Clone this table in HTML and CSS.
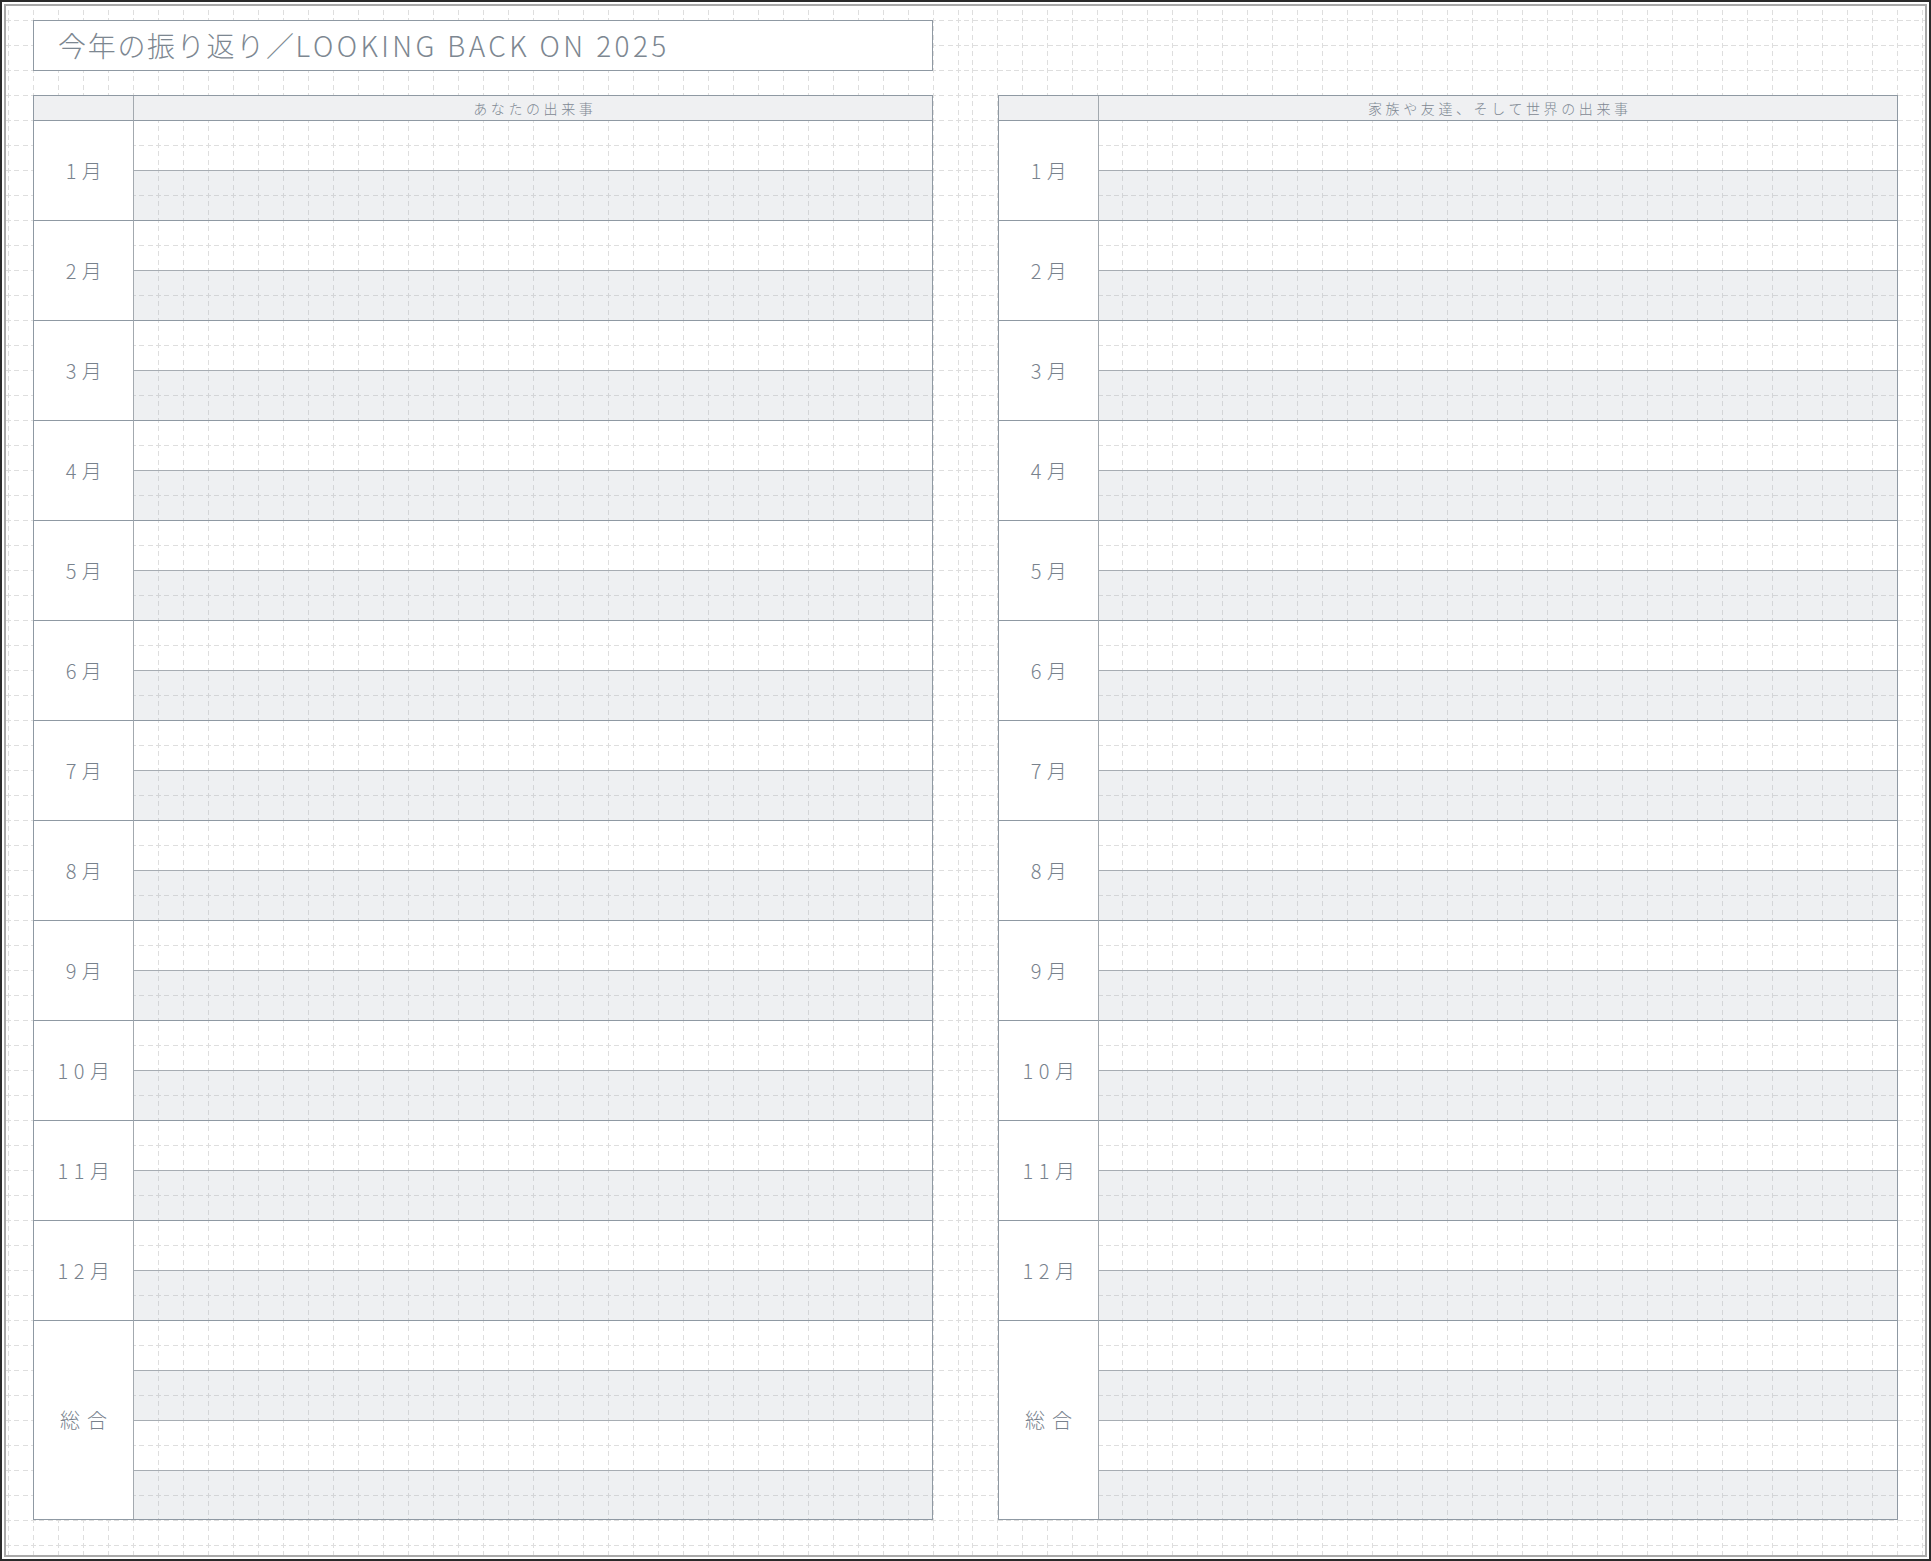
FILE: index.html
```html
<!DOCTYPE html>
<html lang="ja">
<head>
<meta charset="utf-8">
<title>今年の振り返り</title>
<link rel="stylesheet" href="styles.css">
</head>
<body>
<div class="frame">
  <div class="paper">
    <section class="page page-left">
      <h1 class="title"><span class="title-ja">今年の振り返り／</span><span class="title-en">LOOKING BACK ON 2025</span></h1>
      <div class="sheet">
        <div class="hd-label"></div><div class="hd-title">あなたの出来事</div>
        <div class="mlabel">1月</div><div class="lines"><div class="ln"></div><div class="ln shade"></div></div>
        <div class="mlabel">2月</div><div class="lines"><div class="ln"></div><div class="ln shade"></div></div>
        <div class="mlabel">3月</div><div class="lines"><div class="ln"></div><div class="ln shade"></div></div>
        <div class="mlabel">4月</div><div class="lines"><div class="ln"></div><div class="ln shade"></div></div>
        <div class="mlabel">5月</div><div class="lines"><div class="ln"></div><div class="ln shade"></div></div>
        <div class="mlabel">6月</div><div class="lines"><div class="ln"></div><div class="ln shade"></div></div>
        <div class="mlabel">7月</div><div class="lines"><div class="ln"></div><div class="ln shade"></div></div>
        <div class="mlabel">8月</div><div class="lines"><div class="ln"></div><div class="ln shade"></div></div>
        <div class="mlabel">9月</div><div class="lines"><div class="ln"></div><div class="ln shade"></div></div>
        <div class="mlabel">10月</div><div class="lines"><div class="ln"></div><div class="ln shade"></div></div>
        <div class="mlabel">11月</div><div class="lines"><div class="ln"></div><div class="ln shade"></div></div>
        <div class="mlabel">12月</div><div class="lines"><div class="ln"></div><div class="ln shade"></div></div>
        <div class="mlabel total">総合</div><div class="lines"><div class="ln"></div><div class="ln shade"></div><div class="ln"></div><div class="ln shade"></div></div>
      </div>
    </section>
    <section class="page page-right">
      <div class="sheet sheet-right">
        <div class="hd-label"></div><div class="hd-title">家族や友達、そして世界の出来事</div>
        <div class="mlabel">1月</div><div class="lines"><div class="ln"></div><div class="ln shade"></div></div>
        <div class="mlabel">2月</div><div class="lines"><div class="ln"></div><div class="ln shade"></div></div>
        <div class="mlabel">3月</div><div class="lines"><div class="ln"></div><div class="ln shade"></div></div>
        <div class="mlabel">4月</div><div class="lines"><div class="ln"></div><div class="ln shade"></div></div>
        <div class="mlabel">5月</div><div class="lines"><div class="ln"></div><div class="ln shade"></div></div>
        <div class="mlabel">6月</div><div class="lines"><div class="ln"></div><div class="ln shade"></div></div>
        <div class="mlabel">7月</div><div class="lines"><div class="ln"></div><div class="ln shade"></div></div>
        <div class="mlabel">8月</div><div class="lines"><div class="ln"></div><div class="ln shade"></div></div>
        <div class="mlabel">9月</div><div class="lines"><div class="ln"></div><div class="ln shade"></div></div>
        <div class="mlabel">10月</div><div class="lines"><div class="ln"></div><div class="ln shade"></div></div>
        <div class="mlabel">11月</div><div class="lines"><div class="ln"></div><div class="ln shade"></div></div>
        <div class="mlabel">12月</div><div class="lines"><div class="ln"></div><div class="ln shade"></div></div>
        <div class="mlabel total">総合</div><div class="lines"><div class="ln"></div><div class="ln shade"></div><div class="ln"></div><div class="ln shade"></div></div>
      </div>
    </section>
  </div>
</div>
</body>
</html>
```

FILE: styles.css
```css
html, body {
  margin: 0;
  padding: 0;
  background: #ffffff;
}

body {
  font-family: "Noto Sans CJK JP", "Noto Sans", sans-serif;
  color: #7b8590;
}

.frame {
  width: 1931px;
  height: 1561px;
  box-sizing: border-box;
  border: 2px solid #2a2a2a;
  padding: 2px;
  background: #ffffff;
}

/* horizontal dashed grid lines, every 25px, dashes 5px on / ~3px off */
.paper {
  height: 100%;
  box-sizing: border-box;
  border: 2px solid #a8a8a8;
  display: flex;
  background-color: #ffffff;
  background-image:
    conic-gradient(at 5px 1px, transparent 75%, #dedede 0),
    conic-gradient(at 5px 1px, transparent 75%, #dedede 0),
    conic-gradient(at 5px 1px, transparent 75%, #dedede 0);
  background-size: 25px 25px;
  background-position: 0 14px, 8px 14px, 17px 14px;
}

/* vertical dashed grid lines, every 25px */
.page {
  width: 951px;
  height: 100%;
  box-sizing: border-box;
  padding-top: 14px;
  background-image:
    conic-gradient(at 1px 5px, transparent 75%, #dedede 0),
    conic-gradient(at 1px 5px, transparent 75%, #dedede 0),
    conic-gradient(at 1px 5px, transparent 75%, #dedede 0);
  background-size: 25px 25px;
  background-position: 0 12px, 0 20px, 0 29px;
}

.page-left {
  margin-left: 2px;
  padding-left: 25px;
}

.page-right {
  margin-left: 13px;
  padding-left: 26px;
}

.title {
  box-sizing: border-box;
  width: 900px;
  height: 51px;
  margin: 0 0 24px 0;
  border: 1px solid #8f99a3;
  background: #ffffff;
  padding: 0 0 1px 24px;
  display: flex;
  align-items: center;
  font-size: 28px;
  font-weight: 300;
  color: #7d8791;
  line-height: 1;
  white-space: nowrap;
}

.title-ja {
  letter-spacing: 1.7px;
}

.title-en {
  letter-spacing: 3.4px;
}

.sheet {
  width: 900px;
  box-sizing: border-box;
  border: 1px solid #8f99a3;
  display: grid;
  grid-template-columns: 100px 1fr;
}

.sheet-right {
  margin-top: 75px;
}

.hd-label,
.hd-title {
  height: 25px;
  box-sizing: border-box;
  background: #eff0f2;
  border-bottom: 1px solid #8f99a3;
}

.hd-label {
  border-right: 1px solid #a3a9af;
}

.hd-title {
  display: flex;
  align-items: center;
  justify-content: center;
  font-size: 14px;
  font-weight: 300;
  letter-spacing: 3.6px;
  padding-left: 3.6px;
  color: #7e8892;
  line-height: 1;
}

.mlabel {
  box-sizing: border-box;
  background: #ffffff;
  border-right: 1px solid #a3a9af;
  border-bottom: 1px solid #8f99a3;
  display: flex;
  align-items: center;
  justify-content: center;
  font-size: 20px;
  font-weight: 300;
  letter-spacing: 5.5px;
  padding-left: 6px;
  color: #78828d;
  line-height: 1;
}

.mlabel.total {
  letter-spacing: 7px;
  padding-left: 7px;
}

.lines {
  display: flex;
  flex-direction: column;
  border-bottom: 1px solid #8f99a3;
}

.sheet > .lines:last-child,
.sheet > .mlabel.total {
  border-bottom: none;
}

.ln {
  height: 50px;
  box-sizing: border-box;
}

.ln + .ln {
  border-top: 1px solid #a7adb3;
}

.ln:first-child {
  height: 49px;
}

.ln.shade {
  background: rgba(170, 178, 190, 0.2);
}

.sheet > .lines:last-child .ln:last-child {
  height: 49px;
}
```
